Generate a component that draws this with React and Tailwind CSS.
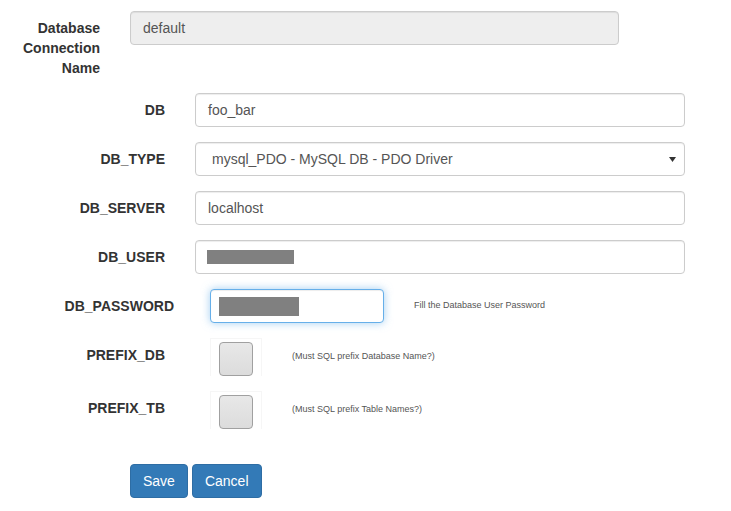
export default function App() {
  const font = { fontFamily: '"Liberation Sans", Arial, sans-serif' };
  const input =
    "h-[34px] w-full rounded-[4px] border border-[#ccc] bg-white px-[12px] text-[14px] text-[#555] shadow-[inset_0_1px_1px_rgba(0,0,0,0.075)] flex items-center";
  const label = "pt-[7px] text-right text-[14px] font-bold leading-[20px] text-[#333]";
  return (
    <div className="w-[731px] h-[511px] bg-white pt-[11px]" style={font}>
      {/* Row 1 */}
      <div className="flex items-start mb-[15px]">
        <div className={`${label} w-[100px]`}>Database Connection Name</div>
        <div className="ml-[30px] w-[489px]">
          <div className={`${input} bg-[#eee]`} style={{ backgroundColor: "#eee" }}>default</div>
        </div>
      </div>

      {[
        ["DB", "foo_bar"],
        ["DB_TYPE", "select"],
        ["DB_SERVER", "localhost"],
        ["DB_USER", "mask"],
      ].map(([l, v]) => (
        <div key={l} className="flex items-start mb-[15px]">
          <div className={`${label} w-[165px]`}>{l}</div>
          <div className="ml-[30px] w-[490px]">
            {v === "select" ? (
              <div className={`${input} justify-between pl-[16px] pr-[8px]`}>
                <span>mysql_PDO - MySQL DB - PDO Driver</span>
                <svg width="7" height="5" viewBox="0 0 7 5">
                  <path d="M0 0h7L3.5 5z" fill="#333" />
                </svg>
              </div>
            ) : v === "mask" ? (
              <div className={`${input} pl-[11px]`}>
                <div className="h-[14px] w-[87px] bg-[#808080]" />
              </div>
            ) : (
              <div className={input}>{v}</div>
            )}
          </div>
        </div>
      ))}

      {/* Password */}
      <div className="flex items-start mb-[15px]">
        <div className={`${label} w-[174px]`}>DB_PASSWORD</div>
        <div className="ml-[36px] w-[174px]">
          <div className="h-[34px] w-full rounded-[4px] border border-[#66afe9] bg-white pl-[8px] flex items-center shadow-[inset_0_1px_1px_rgba(0,0,0,0.075),0_0_8px_rgba(102,175,233,0.6)]">
            <div className="h-[19px] w-[80px] bg-[#808080]" />
          </div>
        </div>
        <div className="ml-[30px] h-[34px] flex items-center text-[9px] text-[#555]">
          Fill the Database User Password
        </div>
      </div>

      {[
        ["PREFIX_DB", "(Must SQL prefix Database Name?)"],
        ["PREFIX_TB", "(Must SQL prefix Table Names?)"],
      ].map(([l, h]) => (
        <div key={l} className="flex items-start mb-[15px]">
          <div className={`${label} w-[165px]`}>{l}</div>
          <div className="ml-[45px] w-[52px] h-[38px] border-x border-t border-[#f6f6f6] pl-[8px] pt-[3px]">
            <div className="h-[34px] w-[34px] rounded-[4px] border border-[#a0a0a0] bg-gradient-to-b from-[#e8e8e8] to-[#dcdcdc]" />
          </div>
          <div className="ml-[30px] h-[38px] flex items-center text-[9px] text-[#555]">{h}</div>
        </div>
      ))}

      {/* Buttons */}
      <div className="flex ml-[130px] mt-[35px] gap-[4px]">
        <button className="h-[34px] px-[12px] rounded-[4px] border border-[#2e6da4] bg-[#337ab7] text-white text-[14px]">
          Save
        </button>
        <button className="h-[34px] px-[12px] rounded-[4px] border border-[#2e6da4] bg-[#337ab7] text-white text-[14px]">
          Cancel
        </button>
      </div>
    </div>
  );
}
